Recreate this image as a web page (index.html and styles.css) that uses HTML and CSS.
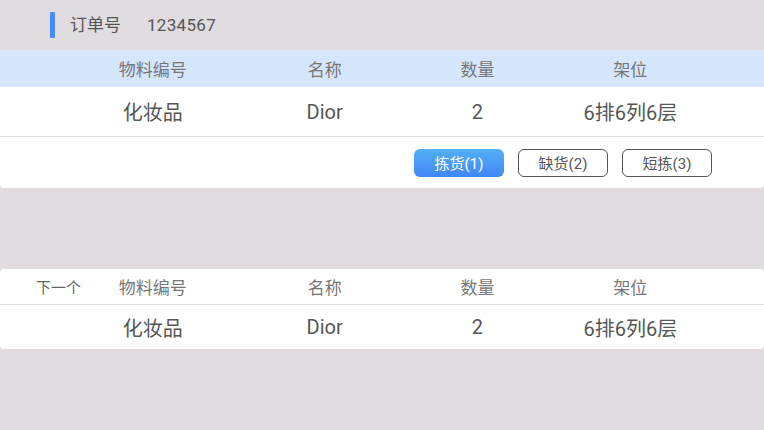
FILE: index.html
```html
<!DOCTYPE html>
<html lang="zh-CN">
<head>
<meta charset="utf-8">
<title>订单</title>
<link rel="stylesheet" href="styles.css">
</head>
<body>
<div class="order-bar">
  <span class="accent"></span>
  <span class="order-label">订单号</span>
  <span class="order-no">1234567</span>
</div>

<section class="card">
  <div class="row head head-blue">
    <span class="cell lead"></span>
    <span class="cell">物料编号</span>
    <span class="cell">名称</span>
    <span class="cell">数量</span>
    <span class="cell">架位</span>
    <span class="cell"></span>
  </div>
  <div class="row data data-tall">
    <span class="cell lead"></span>
    <span class="cell">化妆品</span>
    <span class="cell">Dior</span>
    <span class="cell">2</span>
    <span class="cell">6排6列6层</span>
    <span class="cell"></span>
  </div>
  <div class="actions">
    <button class="btn btn-primary">拣货(1)</button>
    <button class="btn">缺货(2)</button>
    <button class="btn">短拣(3)</button>
  </div>
</section>

<section class="card card-next">
  <div class="row head head-white">
    <span class="cell lead"><span class="next">下一个</span></span>
    <span class="cell">物料编号</span>
    <span class="cell">名称</span>
    <span class="cell">数量</span>
    <span class="cell">架位</span>
    <span class="cell"></span>
  </div>
  <div class="row data data-short">
    <span class="cell lead"></span>
    <span class="cell">化妆品</span>
    <span class="cell">Dior</span>
    <span class="cell">2</span>
    <span class="cell">6排6列6层</span>
    <span class="cell"></span>
  </div>
</section>
</body>
</html>
```

FILE: styles.css
```css
* { box-sizing: border-box; }
html, body {
  margin: 0;
  padding: 0;
}
body {
  width: 764px;
  height: 430px;
  background: #e0dce0;
  font-family: Roboto, "Noto Sans CJK SC", sans-serif;
  color: #555;
  overflow: hidden;
}

.order-bar {
  height: 50px;
  display: flex;
  align-items: center;
  padding-left: 50px;
}
.accent {
  width: 5px;
  height: 26px;
  background: #4a8bf5;
  border-radius: 1px;
  margin-right: 15px;
}
.order-label {
  font-size: 17px;
  line-height: 1;
  color: #555;
  margin-right: 26px;
}
.order-no {
  font-size: 17px;
  line-height: 1;
  color: #555;
  letter-spacing: 0.3px;
}

.card {
  background: #fff;
  border-radius: 0 0 4px 4px;
}
.card-next {
  margin-top: 81px;
  border-radius: 4px;
}

.row {
  display: grid;
  grid-template-columns: 7.5% 25% 20% 20% 20% 7.5%;
  align-items: center;
}
.cell {
  text-align: center;
  white-space: nowrap;
}
.cell.lead { text-align: left; }

.head {
  font-size: 17px;
  color: #777;
}
.head-blue {
  height: 37px;
  background: #d6e6fc;
}
.head-white {
  height: 36px;
  border-bottom: 1px solid #dedede;
}
.next {
  display: inline-block;
  padding-left: 36px;
  font-size: 15px;
  color: #666;
}

.data {
  font-size: 20px;
  color: #555;
}
.data-tall {
  height: 50px;
  border-bottom: 1px solid #dedede;
}
.data-short {
  height: 44px;
}

.actions {
  height: 51px;
  display: flex;
  justify-content: flex-end;
  align-items: center;
  gap: 14px;
  padding-right: 52px;
}
.btn {
  width: 90px;
  height: 28px;
  border: 1px solid #555;
  border-radius: 6px;
  background: #fff;
  color: #555;
  font-family: Roboto, "Noto Sans CJK SC", sans-serif;
  font-size: 15px;
  padding: 0;
}
.btn-primary {
  border: none;
  color: #fff;
  background: linear-gradient(#53aff8, #4286f5);
}
```
